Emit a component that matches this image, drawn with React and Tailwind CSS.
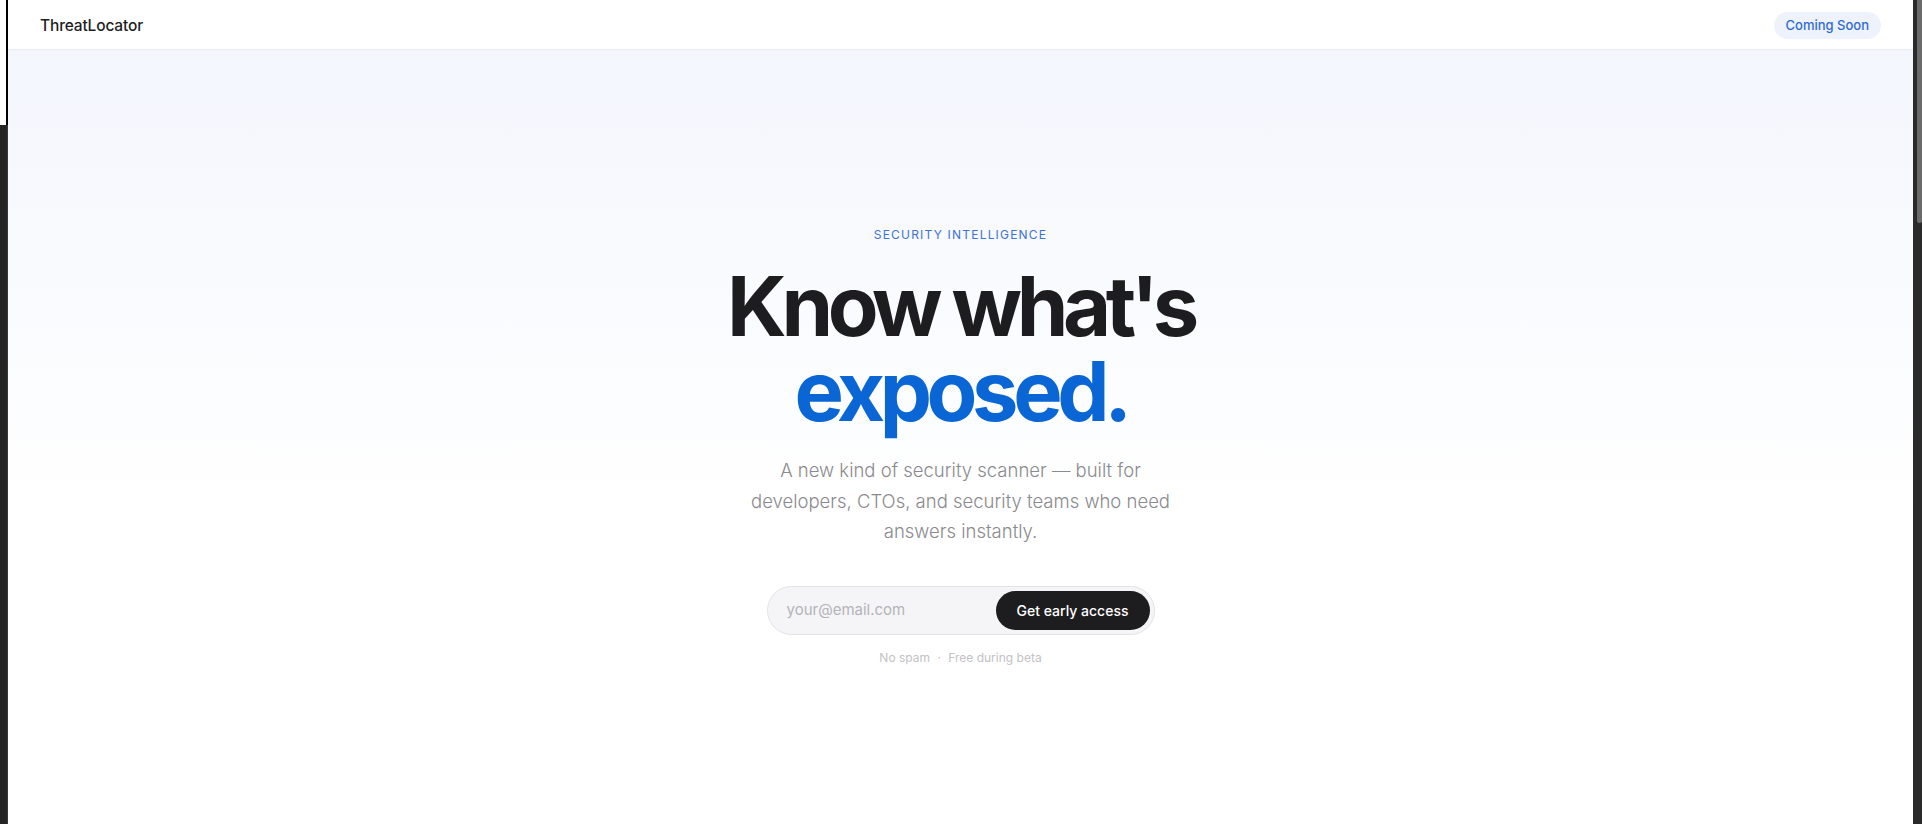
export default function App() {
  return (
    <div className="flex h-[824px] w-full overflow-hidden bg-[#242424]" style={{ fontFamily: 'Inter, "Noto Sans", sans-serif' }}>
      {/* left window edge */}
      <div className="flex w-[8px] shrink-0 flex-col">
        <div className="h-[125px] border-r-2 border-black bg-white"></div>
        <div className="flex-1 border-r border-[#3a3a3a] bg-[#242424]"></div>
      </div>

      {/* page */}
      <div className="flex min-w-0 flex-1 flex-col bg-white">
        <header className="flex h-[50px] shrink-0 items-center justify-between border-b border-[#e9edf3] bg-white px-8 pt-[2px]">
          <span className="text-[15.5px] font-medium tracking-[-0.01em] text-[#1d1d1f]">ThreatLocator</span>
          <span className="rounded-full bg-[#edf2fc] px-[12px] py-[4px] text-[13px] font-medium text-[#2f6bd8]">
            Coming Soon
          </span>
        </header>

        <main className="flex flex-1 flex-col items-center bg-gradient-to-b from-[#f3f6fd] via-[#fbfcfe] via-40% to-white to-60%">
          <p className="mt-[176px] text-[12px] tracking-[0.1em] text-[#3a72d6]">SECURITY INTELLIGENCE</p>

          <h1 className="mt-[20px] text-center text-[83px] font-bold leading-[85px] tracking-[-0.065em]">
            <span className="block text-[#1d1d1f]">Know what's</span>
            <span className="block text-[#0a66d4]">exposed.</span>
          </h1>

          <p className="mt-[21px] max-w-[430px] text-center text-[18.5px] font-light leading-[30.5px] text-[#8a8a8e]">
            A new kind of security scanner — built for developers, CTOs, and security teams who need answers instantly.
          </p>

          <form className="mt-[39px] flex h-[49px] w-[388px] items-center rounded-full border border-[#e3e3e6] bg-[#f5f5f7] p-[4px] pl-[19px]">
            <input
              type="email"
              placeholder="your@email.com"
              className="min-w-0 flex-1 bg-transparent text-[15px] text-[#1d1d1f] outline-none placeholder:text-[#b3b3b8]"
            />
            <button
              type="button"
              className="h-[39px] rounded-full bg-[#1d1d1f] px-[21px] text-[14px] font-medium text-white"
            >
              Get early access
            </button>
          </form>

          <p className="mt-[14px] text-[12px] text-[#c2c2c6]">
            No spam <span className="mx-[4px]">·</span> Free during beta
          </p>
        </main>
      </div>

      {/* right window edge / scrollbar */}
      <div className="flex w-[9px] shrink-0 bg-[#2a2a2a] pl-[4px]">
        <div className="h-[223px] w-[5px] rounded-b-sm bg-[#6b6b6b]"></div>
      </div>
    </div>
  );
}
